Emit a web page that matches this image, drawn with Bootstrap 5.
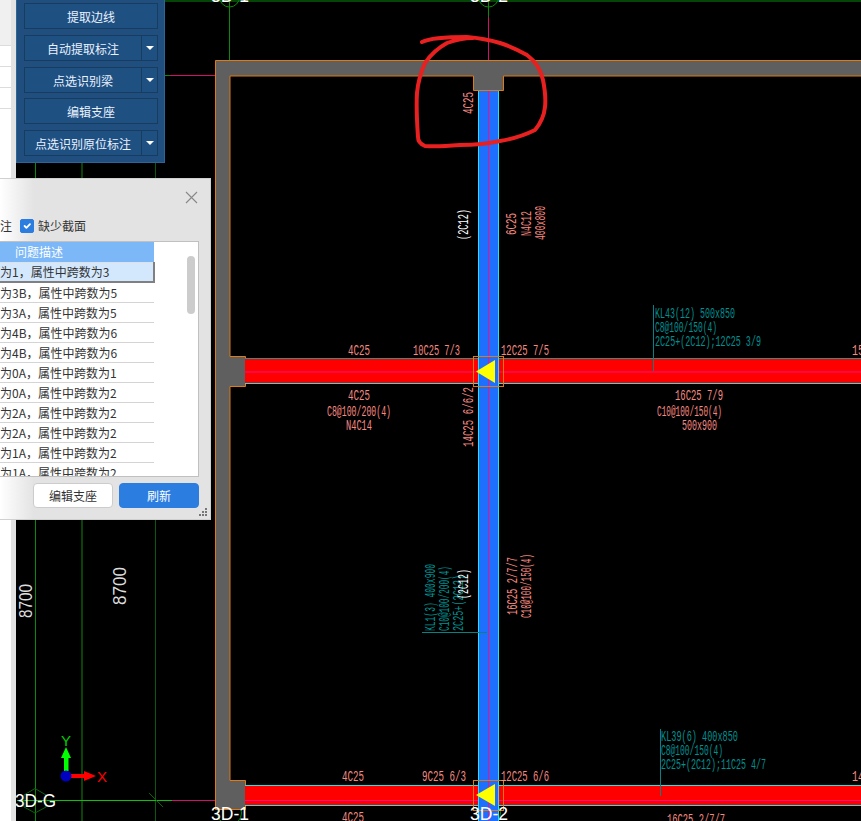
<!DOCTYPE html>
<html lang="zh-CN">

<head>
    <meta charset="UTF-8">
    <meta name="viewport" content="width=device-width, initial-scale=1.0">
    <title>识别梁</title>
    <link href="https://cdn.jsdelivr.net/npm/bootstrap@5.3.0/dist/css/bootstrap.min.css" rel="stylesheet">
    <style>
        html, body { height: 100%; margin: 0; background: #000; overflow: hidden; }
        body { font-family: "Liberation Sans", "Noto Sans CJK SC", sans-serif; font-size: 12px; }
        .cad-stage { position: relative; width: 861px; height: 821px; overflow: hidden; background: #000; }
        .cad-drawing { position: absolute; inset: 0; }
        .cad-drawing text { font-family: "Liberation Mono", monospace; font-size: 15px; }
        .cad-drawing .txt-red { fill: #f58a80; }
        .cad-drawing .txt-teal { fill: #009090; }
        .cad-drawing .txt-white { fill: #fff; }
        .cad-drawing .txt-axis { font-family: "Liberation Sans", sans-serif; fill: #fff; font-size: 18px; }
        .cad-drawing .txt-dim { font-family: "Liberation Sans", sans-serif; fill: #ddd; }

        /* left sliver of the property list */
        .side-list { position: absolute; left: 0; top: 0; bottom: 0; width: 16px; background: #fff; border-right: 5px solid #e3e3e3; }
        .side-head { height: 45px; background: #f0f0f0; }
        .side-row { height: 21px; border-top: 1px solid #dcdcdc; }

        /* blue tool panel */
        .tool-panel { position: absolute; left: 16px; top: -4px; width: 149px; height: 167px; background: #204f7f; border: 1px solid #2c6699; padding: 6px 6px 6px 7px; display: flex; flex-direction: column; gap: 5.750px; }
        .tool-row { display: flex; height: 26px; }
        .tool-btn { flex: 1; padding: 5px 0 0; font-size: 12px; line-height: 19px; color: #eaf2ff; background: #1f5082; border: 1px solid #183c60; border-radius: 0; }
        .tool-caret { flex: 0 0 17px; margin-left: -1px; padding-left: 1px; display: flex; align-items: center; justify-content: center; background: #1f5082; border: 1px solid #183c60; }
        .tool-caret::after { content: ""; border: 4px solid transparent; border-top: 4px solid #fff; border-bottom: 0; }

        /* check dialog */
        .check-dialog { position: absolute; left: 0; top: 178px; width: 211px; height: 342px; background: linear-gradient(90deg, #fff 0, #e3e3e3 34px); border: 1px solid #d0d0d0; border-left: 0; font-family: "Noto Sans CJK SC", sans-serif; color: #333; overflow: hidden; }
        .close-x { position: absolute; left: 185px; top: 12px; }
        .filter-row { height: 16px; margin-top: 39px; line-height: 16px; white-space: nowrap; }
        .filter-row .form-check-input { width: 14px; height: 14px; margin: 0 4px 0 8px; float: none; vertical-align: -2px; background-color: #2b7de0; border-color: #2b7de0; border-radius: 2px; }
        .issue-box { position: absolute; left: 0; top: 62px; width: 199px; height: 236px; background: #fff; border: 1px solid #c0c0c0; border-left: 0; overflow: hidden; }
        .issue-table { width: 155px; margin: 0; table-layout: fixed; border-collapse: collapse; }
        .issue-table th { height: 20px; padding: 0 76px 0 0; background: #7cb8f8; color: #fff; font-weight: 400; font-size: 12px; line-height: 19px; text-align: center; vertical-align: top; }
        .issue-table td { height: 20px; padding: 1px 0 0; font-size: 12px; line-height: 18px; vertical-align: top; color: #333; white-space: nowrap; overflow: hidden; border: 0; border-bottom: 1px solid #d4d4d4; background: #fff; }
        .issue-table tr.row-on td { padding-top: 0; background: #d3e8fd; border-bottom: 2px solid #808080; border-right: 2px solid #808080; }
        .issue-scroll { position: absolute; left: 187px; top: 14px; width: 8px; height: 58px; background: #ccc; border-radius: 4px; }
        .dialog-foot { position: absolute; left: 33px; top: 304px; display: flex; gap: 6px; }
        .foot-btn { width: 80px; height: 25px; padding: 0; font-size: 12px; line-height: 23px; border-radius: 4px; }
        .foot-light { background: #fff; border: 1px solid #ccc; color: #333; }
        .foot-blue { background: #2b7de0; border: 1px solid #2b7de0; color: #fff; }
        .size-grip { position: absolute; left: 199px; top: 329px; }
    </style>
</head>

<body>
    <div class="cad-stage">
        <!-- 图纸 -->
        <svg class="cad-drawing" width="861" height="821" viewBox="0 0 861 821">
            <!-- 轴网 -->
            <g fill="none">
                <path d="M35.500 162V821" stroke="#0a8a0a"/>
                <path d="M82 162V821" stroke="#0a420a" stroke-width="2"/>
                <path d="M155.500 162V821" stroke="#0a5a0a"/>
                <path d="M164 1H861M229.500 0V60M488.500 0V17" stroke="#0a8a0a"/>
                <path d="M164 75.500H170" stroke="#0a8a0a"/>
                <path d="M170 75.500H215M488.500 17V60M172 800.500H215" stroke="#d0106a"/>
                <path d="M17 800.500H172" stroke="#0cc00c"/>
                <path d="M149 793L163 807" stroke="#0b650b"/>
                <path d="M35 788.500L46 795V807L35 813L24 807V795Z" stroke="#0b650b"/>
                <circle cx="229.500" cy="-3" r="10" stroke="#0a8a0a"/>
                <circle cx="488.500" cy="-3" r="10" stroke="#0a8a0a"/>
                <circle cx="229.500" cy="813" r="12" stroke="#0a8a0a"/>
                <circle cx="488.500" cy="813" r="12" stroke="#0a8a0a"/>
            </g>

            <!-- 墙 -->
            <path d="M861 60.500H215.500V809.500H245.500V780.500H230V386.500H245.500V356.500H230V76H473.500V90.500H503.500V76H861" fill="#5f5f5f" stroke="#e07a12"/>

            <!-- 横向梁 -->
            <rect x="245" y="359" width="616" height="25" fill="#ff0000"/>
            <path d="M245 358.500H861" stroke="#1b9a8c"/>
            <path d="M245 383.500H861" stroke="#22e6e6"/>
            <path d="M245 372H861" stroke="#f0108a"/>
            <rect x="245" y="785" width="616" height="21" fill="#ff0000"/>
            <path d="M245 785.500H861M245 805.500H861" stroke="#22e6e6"/>
            <path d="M245 800.500H861" stroke="#f0108a"/>

            <!-- 纵向梁 -->
            <rect x="478" y="91" width="21" height="730" fill="#1f6fff"/>
            <path d="M478.500 91V821M498.500 91V821" stroke="#22e6e6"/>
            <path d="M488.500 91V821" stroke="#f0108a"/>

            <!-- 支座 -->
            <rect x="473.500" y="356.500" width="30" height="30" fill="none" stroke="#e07a12"/>
            <path d="M476 371.500L495 360V383Z" fill="#ffff00"/>
            <rect x="473.500" y="780.500" width="30" height="30" fill="none" stroke="#e07a12"/>
            <path d="M476 795L495 784V806Z" fill="#ffff00"/>

            <!-- 引出线 -->
            <path d="M653.500 305V371M660.500 729V796M422 632.500H487" stroke="#0a8080" fill="none"/>

            <!-- 标注 -->
            <g class="txt-red">
                <text x="348" y="355" textLength="22" lengthAdjust="spacingAndGlyphs">4C25</text>
                <text x="413" y="355" textLength="47" lengthAdjust="spacingAndGlyphs">10C25 7/3</text>
                <text x="501" y="355" textLength="48" lengthAdjust="spacingAndGlyphs">12C25 7/5</text>
                <text x="852" y="355" textLength="12" lengthAdjust="spacingAndGlyphs">15</text>
                <text x="348" y="400" textLength="22" lengthAdjust="spacingAndGlyphs">4C25</text>
                <text x="327" y="416" textLength="64" lengthAdjust="spacingAndGlyphs">C8@100/200(4)</text>
                <text x="346" y="430" textLength="26" lengthAdjust="spacingAndGlyphs">N4C14</text>
                <text x="675" y="400" textLength="48" lengthAdjust="spacingAndGlyphs">16C25 7/9</text>
                <text x="657" y="416" textLength="65" lengthAdjust="spacingAndGlyphs">C10@100/150(4)</text>
                <text x="682" y="430" textLength="35" lengthAdjust="spacingAndGlyphs">500x900</text>
                <text x="342" y="781" textLength="22" lengthAdjust="spacingAndGlyphs">4C25</text>
                <text x="422" y="781" textLength="44" lengthAdjust="spacingAndGlyphs">9C25 6/3</text>
                <text x="501" y="781" textLength="48" lengthAdjust="spacingAndGlyphs">12C25 6/6</text>
                <text x="852" y="781" textLength="12" lengthAdjust="spacingAndGlyphs">14</text>
                <text x="342" y="822" textLength="22" lengthAdjust="spacingAndGlyphs">4C25</text>
                <text x="667" y="824" textLength="58" lengthAdjust="spacingAndGlyphs">16C25 2/7/7</text>
                <text transform="translate(473 114) rotate(-90)" textLength="22" lengthAdjust="spacingAndGlyphs">4C25</text>
                <text transform="translate(516 235) rotate(-90)" textLength="22" lengthAdjust="spacingAndGlyphs">6C25</text>
                <text transform="translate(531 236) rotate(-90)" textLength="25" lengthAdjust="spacingAndGlyphs">N4C12</text>
                <text transform="translate(545 240) rotate(-90)" textLength="34" lengthAdjust="spacingAndGlyphs">400x800</text>
                <text transform="translate(473 447) rotate(-90)" textLength="60" lengthAdjust="spacingAndGlyphs">14C25 6/6/2</text>
                <text transform="translate(517 615) rotate(-90)" textLength="58" lengthAdjust="spacingAndGlyphs">16C25 2/7/7</text>
                <text transform="translate(531 618) rotate(-90)" textLength="64" lengthAdjust="spacingAndGlyphs">C10@100/150(4)</text>
            </g>
            <g class="txt-teal">
                <text x="655" y="318" textLength="80" lengthAdjust="spacingAndGlyphs">KL43(12) 500x850</text>
                <text x="655" y="332" textLength="62" lengthAdjust="spacingAndGlyphs">C8@100/150(4)</text>
                <text x="655" y="346" textLength="106" lengthAdjust="spacingAndGlyphs">2C25+(2C12);12C25 3/9</text>
                <text x="661" y="741" textLength="77" lengthAdjust="spacingAndGlyphs">KL39(6) 400x850</text>
                <text x="661" y="755" textLength="62" lengthAdjust="spacingAndGlyphs">C8@100/150(4)</text>
                <text x="661" y="769" textLength="105" lengthAdjust="spacingAndGlyphs">2C25+(2C12);11C25 4/7</text>
                <text transform="translate(435 631) rotate(-90)" textLength="67" lengthAdjust="spacingAndGlyphs">KL1(3) 400x900</text>
                <text transform="translate(449 631) rotate(-90)" textLength="65" lengthAdjust="spacingAndGlyphs">C10@100/200(4)</text>
                <text transform="translate(463 631) rotate(-90)" textLength="56" lengthAdjust="spacingAndGlyphs">2C25+(2C12)</text>
            </g>
            <g class="txt-white">
                <text transform="translate(468 240) rotate(-90)" textLength="31" lengthAdjust="spacingAndGlyphs">(2C12)</text>
                <text transform="translate(468 599) rotate(-90)" textLength="30" lengthAdjust="spacingAndGlyphs">(2C12)</text>
            </g>

            <!-- 轴号 -->
            <text class="txt-axis" x="15" y="807" textLength="41" lengthAdjust="spacingAndGlyphs">3D-G</text>
            <text class="txt-axis" x="211" y="820" textLength="38" lengthAdjust="spacingAndGlyphs">3D-1</text>
            <text class="txt-axis" x="470" y="820" textLength="38" lengthAdjust="spacingAndGlyphs">3D-2</text>
            <text class="txt-axis" x="211" y="2" textLength="38" lengthAdjust="spacingAndGlyphs">3D-1</text>
            <text class="txt-axis" x="470" y="2" textLength="38" lengthAdjust="spacingAndGlyphs">3D-2</text>
            <text class="txt-dim" transform="translate(32 618) rotate(-90)" style="font-size:18px" textLength="34" lengthAdjust="spacingAndGlyphs">8700</text>
            <text class="txt-dim" transform="translate(126 605) rotate(-90)" style="font-size:19px" textLength="38" lengthAdjust="spacingAndGlyphs">8700</text>

            <!-- 坐标系 -->
            <path d="M64 756H68.500V771H64Z" fill="#00ff00"/>
            <path d="M66 747L71 758H61Z" fill="#00ff00"/>
            <text x="61" y="746" style="font-family:'Liberation Sans',sans-serif;font-size:15px;fill:#00d000">Y</text>
            <path d="M71 774H85V778H71Z" fill="#ff0000"/>
            <path d="M96 776L84 771V781Z" fill="#ff0000"/>
            <text x="97" y="782" style="font-family:'Liberation Sans',sans-serif;font-size:15px;fill:#ff0000">X</text>
            <circle cx="66" cy="776" r="5.500" fill="#0000c0"/>

            <!-- 手画圈 -->
            <path d="M422 42C430 38 444 37 467 37C480 38 490 40 500 43C510 46 518 50 527 55C535 61 541 70 543 80C545 90 546 98 545 107C544 117 540 124 535 130C525 135 512 139 500 141C487 144 473 145 460 145C448 146 436 147 425 146C420 144 418 141 418 137C417 122 416 108 417 93C418 82 421 72 425 63C431 54 438 48 447 43C455 40 464 38 473 38" fill="none" stroke="#e8201f" stroke-width="4" stroke-linecap="round"/>
        </svg>

        <!-- 左侧属性列表 -->
        <div class="side-list">
            <div class="side-head"></div>
            <div class="side-row"></div>
            <div class="side-row"></div>
            <div class="side-row"></div>
            <div class="side-row"></div>
        </div>

        <!-- 工具面板 -->
        <div class="tool-panel">
            <div class="tool-row"><button type="button" class="btn tool-btn">提取边线</button></div>
            <div class="tool-row"><button type="button" class="btn tool-btn">自动提取标注</button><span class="tool-caret"></span></div>
            <div class="tool-row"><button type="button" class="btn tool-btn">点选识别梁</button><span class="tool-caret"></span></div>
            <div class="tool-row"><button type="button" class="btn tool-btn">编辑支座</button></div>
            <div class="tool-row"><button type="button" class="btn tool-btn">点选识别原位标注</button><span class="tool-caret"></span></div>
        </div>

        <!-- 校核对话框 -->
        <div class="check-dialog">
            <svg class="close-x" width="13" height="13" viewBox="0 0 13 13"><path d="M1 1L12 12M12 1L1 12" stroke="#888" stroke-width="1.100"/></svg>
            <div class="filter-row">注<input class="form-check-input" type="checkbox" checked>缺少截面</div>
            <div class="issue-box">
                <table class="table issue-table">
                    <thead>
                        <tr><th>问题描述</th></tr>
                    </thead>
                    <tbody>
                        <tr class="row-on"><td>为1，属性中跨数为3</td></tr>
                        <tr><td>为3B，属性中跨数为5</td></tr>
                        <tr><td>为3A，属性中跨数为5</td></tr>
                        <tr><td>为4B，属性中跨数为6</td></tr>
                        <tr><td>为4B，属性中跨数为6</td></tr>
                        <tr><td>为0A，属性中跨数为1</td></tr>
                        <tr><td>为0A，属性中跨数为2</td></tr>
                        <tr><td>为2A，属性中跨数为2</td></tr>
                        <tr><td>为2A，属性中跨数为2</td></tr>
                        <tr><td>为1A，属性中跨数为2</td></tr>
                        <tr><td>为1A，属性中跨数为2</td></tr>
                    </tbody>
                </table>
                <div class="issue-scroll"></div>
            </div>
            <div class="dialog-foot">
                <button type="button" class="btn foot-btn foot-light">编辑支座</button>
                <button type="button" class="btn foot-btn foot-blue">刷新</button>
            </div>
            <svg class="size-grip" width="9" height="9" viewBox="0 0 9 9"><path d="M6 0h2v2H6zM3 3h2v2H3zM6 3h2v2H6zM0 6h2v2H0zM3 6h2v2H3zM6 6h2v2H6z" fill="#777"/></svg>
        </div>
    </div>

    <script src="https://cdn.jsdelivr.net/npm/bootstrap@5.3.0/dist/js/bootstrap.bundle.min.js"></script>
</body>

</html>
